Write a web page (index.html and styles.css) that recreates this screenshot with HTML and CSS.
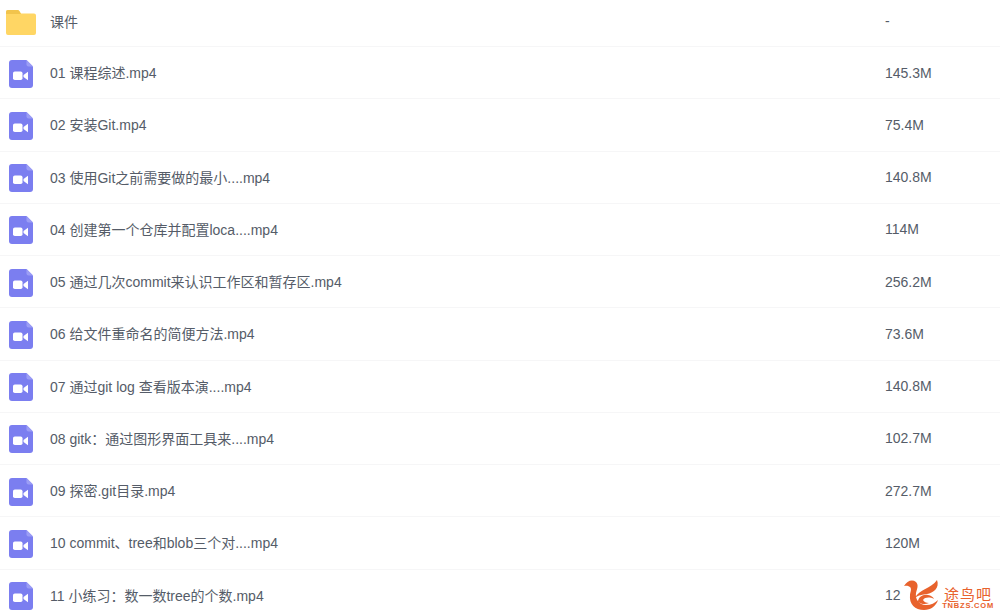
FILE: index.html
```html
<!DOCTYPE html>
<html lang="en">
<head>
    <meta charset="UTF-8">
    <title>File list</title>
    <link rel="stylesheet" href="styles.css">
</head>
<body>
<svg class="defs" width="0" height="0">
    <symbol id="folder" viewBox="0 0 30 25">
        <path d="M0 2a2 2 0 0 1 2-2h9.500a2 2 0 0 1 1.600.8L15 3.500h13a2 2 0 0 1 2 2V23a2 2 0 0 1-2 2H2a2 2 0 0 1-2-2z" fill="#ffd664"/>
        <path d="M0 4V2a2 2 0 0 1 2-2h9.500a2 2 0 0 1 1.600.8L15 4z" fill="#f2c44c"/>
    </symbol>
    <symbol id="video" viewBox="0 0 24 28">
        <path d="M3 0h14.500L24 6.500V25a3 3 0 0 1-3 3H3a3 3 0 0 1-3-3V3a3 3 0 0 1 3-3z" fill="#7b7ef0"/>
        <path d="M17.500 0L24 6.500h-4.500a2 2 0 0 1-2-2z" fill="#9b9df5"/>
        <rect x="4" y="11.500" width="9.500" height="8.500" rx="1.800" fill="#fff"/>
        <path d="M14.500 15l4.500-3.200v8.400L14.500 17z" fill="#fff"/>
    </symbol>
</svg>
<ul class="file-list">
    <li class="row"><span class="icon"><svg width="30" height="25"><use href="#folder"/></svg></span><span class="name">课件</span><span class="size">-</span></li>
    <li class="row"><span class="icon"><svg width="24" height="28"><use href="#video"/></svg></span><span class="name">01 课程综述.mp4</span><span class="size">145.3M</span></li>
    <li class="row"><span class="icon"><svg width="24" height="28"><use href="#video"/></svg></span><span class="name">02 安装Git.mp4</span><span class="size">75.4M</span></li>
    <li class="row"><span class="icon"><svg width="24" height="28"><use href="#video"/></svg></span><span class="name">03 使用Git之前需要做的最小....mp4</span><span class="size">140.8M</span></li>
    <li class="row"><span class="icon"><svg width="24" height="28"><use href="#video"/></svg></span><span class="name">04 创建第一个仓库并配置loca....mp4</span><span class="size">114M</span></li>
    <li class="row"><span class="icon"><svg width="24" height="28"><use href="#video"/></svg></span><span class="name">05 通过几次commit来认识工作区和暂存区.mp4</span><span class="size">256.2M</span></li>
    <li class="row"><span class="icon"><svg width="24" height="28"><use href="#video"/></svg></span><span class="name">06 给文件重命名的简便方法.mp4</span><span class="size">73.6M</span></li>
    <li class="row"><span class="icon"><svg width="24" height="28"><use href="#video"/></svg></span><span class="name">07 通过git log 查看版本演....mp4</span><span class="size">140.8M</span></li>
    <li class="row"><span class="icon"><svg width="24" height="28"><use href="#video"/></svg></span><span class="name">08 gitk：通过图形界面工具来....mp4</span><span class="size">102.7M</span></li>
    <li class="row"><span class="icon"><svg width="24" height="28"><use href="#video"/></svg></span><span class="name">09 探密.git目录.mp4</span><span class="size">272.7M</span></li>
    <li class="row"><span class="icon"><svg width="24" height="28"><use href="#video"/></svg></span><span class="name">10 commit、tree和blob三个对....mp4</span><span class="size">120M</span></li>
    <li class="row"><span class="icon"><svg width="24" height="28"><use href="#video"/></svg></span><span class="name">11 小练习：数一数tree的个数.mp4</span><span class="size">12</span></li>
</ul>
<div class="watermark">
    <svg class="mark-logo" width="40" height="34" viewBox="0 0 40 34">
        <path d="M3 7C6 2 11 0 15 3c3 3 1 7 0 11-1 6 3 12 10 12 5 0 9-2 12-5-2 6-7 10-14 10C14 31 8 25 9 16c.3-3 2-6 0-8-2-1.500-4-1.500-6-1z" fill="#e8622c"/>
        <path d="M14 19C18 10 30 10 36 1c3 8-4 13-10 14-4 .7-9 1-12 4z" fill="#e8622c"/>
        <path d="M17 23c0-5 5-8 10-7 3 .5 5 2 6 4-4-2-9-2-11 1 1 2 3 3 6 3-4 2-8 1-11-1z" fill="#e8622c"/>
    </svg>
    <div class="mark-text">
        <span class="mark-cn">途鸟吧</span>
        <span class="mark-en">TNBZS.COM</span>
    </div>
</div>
</body>
</html>
```

FILE: styles.css
```css
html,
body {
    margin: 0;
    padding: 0;
    height: 613px;
    overflow: hidden;
    background-color: #fff;
}

body {
    position: relative;
    font-family: "Liberation Sans", "Noto Sans CJK SC", sans-serif;
    font-size: 14px;
    color: #555c68;
}

.defs {
    display: block;
    height: 0;
}

.file-list {
    list-style: none;
    margin: 0;
    padding: 0;
}

.row {
    display: flex;
    align-items: center;
    height: 51.25px;
    border-bottom: 1px solid #f6f6f7;
}

.row:first-child {
    height: 42px;
    padding-bottom: 4px;
}

.icon {
    display: flex;
    justify-content: center;
    align-items: center;
    width: 42px;
    margin-right: 8px;
    padding-top: 2px;
}

.name {
    flex: 1;
    margin-bottom: 1px;
}

.size {
    width: 115px;
}

.watermark {
    position: absolute;
    right: 6px;
    bottom: 0;
    display: flex;
    align-items: flex-end;
    gap: 1px;
}

.mark-logo {
    display: block;
}

.mark-text {
    display: flex;
    flex-direction: column;
    align-items: center;
    padding-bottom: 4px;
    color: #e8622c;
}

.mark-cn {
    font-size: 15px;
    line-height: 15px;
    letter-spacing: 1px;
}

.mark-en {
    font-family: "Liberation Sans", sans-serif;
    font-size: 7.500px;
    line-height: 7px;
    font-weight: bold;
    letter-spacing: 0.8px;
}
```
